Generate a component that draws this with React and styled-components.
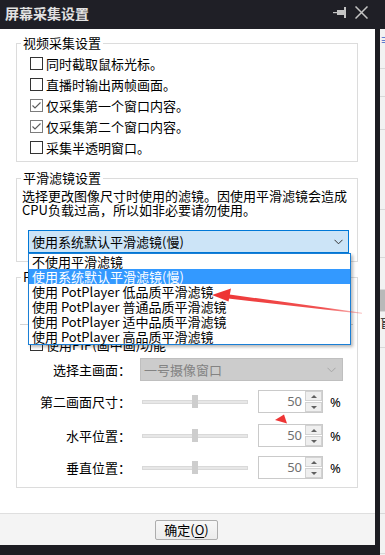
import React from 'react'
import styled, { createGlobalStyle } from 'styled-components'

const GlobalStyle = createGlobalStyle`
  * { box-sizing: border-box; }
  html, body { margin: 0; padding: 0; background: #fff; }
  body {
    font-family: "Noto Sans CJK SC", "Noto Sans", sans-serif;
    font-size: 13px;
    color: #000;
  }
`

const videoOptions = [
  { label: '同时截取鼠标光标。', checked: false },
  { label: '直播时输出两帧画面。', checked: false },
  { label: '仅采集第一个窗口内容。', checked: true },
  { label: '仅采集第二个窗口内容。', checked: true },
  { label: '采集半透明窗口。', checked: false },
]

const filterOptions = [
  '不使用平滑滤镜',
  '使用系统默认平滑滤镜(慢)',
  '使用 PotPlayer 低品质平滑滤镜',
  '使用 PotPlayer 普通品质平滑滤镜',
  '使用 PotPlayer 适中品质平滑滤镜',
  '使用 PotPlayer 高品质平滑滤镜',
]

const sliders = ['第二画面尺寸：', '水平位置：', '垂直位置：']

const Chevron = ({ color }) => (
  <svg width="9" height="6" viewBox="0 0 9 6">
    <polyline points="0.5,0.8 4.5,4.8 8.5,0.8" fill="none" stroke={color} strokeWidth="1" />
  </svg>
)

const Check = () => (
  <svg width="11" height="11" viewBox="0 0 11 11">
    <polyline points="1.5,5.5 4,8 9.5,2.5" fill="none" stroke="#5a5a5a" strokeWidth="1.1" />
  </svg>
)

const CheckOption = ({ label, checked }) => (
  <CheckRow>
    <Box checked={checked}>{checked && <Check />}</Box>
    <span>{label}</span>
  </CheckRow>
)

const SliderRow = ({ label }) => (
  <FormRow>
    <Label>{label}</Label>
    <Slider>
      <Track>
        <Thumb />
      </Track>
    </Slider>
    <Spin>
      <SpinValue>50</SpinValue>
      <SpinButtons>
        <SpinButton><Arrow up /></SpinButton>
        <SpinButton><Arrow /></SpinButton>
      </SpinButtons>
    </Spin>
    <Percent>%</Percent>
  </FormRow>
)

const App = () => (
  <>
    <GlobalStyle />
    <Screen>
      <TitleBar>
        <Title>屏幕采集设置</Title>
        <TitleIcons>
          <svg width="14" height="11" viewBox="0 0 14 11">
            <rect x="0" y="5" width="5" height="1.2" fill="#c4c4c4" />
            <rect x="4" y="3" width="7" height="5" fill="#c4c4c4" />
            <rect x="11" y="0" width="2" height="11" fill="#c4c4c4" />
          </svg>
          <svg width="13" height="13" viewBox="0 0 13 13">
            <path d="M0.5 0.5 L12.5 12.5 M12.5 0.5 L0.5 12.5" stroke="#c4c4c4" strokeWidth="1.5" />
          </svg>
        </TitleIcons>
      </TitleBar>

      <Body>
        <WindowColumn>
          <Content>
            <Main>
              <Group>
                <Legend>视频采集设置</Legend>
                <CheckList>
                  {videoOptions.map(o => (
                    <CheckOption key={o.label} {...o} />
                  ))}
                </CheckList>
              </Group>

              <Group gap={8}>
                <Legend>平滑滤镜设置</Legend>
                <FilterBody>
                  <Description>
                    选择更改图像尺寸时使用的滤镜。因使用平滑滤镜会造成
                    <br />
                    CPU负载过高，所以如非必要请勿使用。
                  </Description>
                  <SelectWrap>
                    <Select>
                      <span>使用系统默认平滑滤镜(慢)</span>
                      <Chevron color="#333" />
                    </Select>
                    <DropList>
                      {filterOptions.map((opt, i) => (
                        <DropItem key={opt} active={i === 1}>{opt}</DropItem>
                      ))}
                    </DropList>
                  </SelectWrap>
                </FilterBody>
              </Group>

              <Group gap={7}>
                <Legend>PIP(画中画)设置</Legend>
                <PipBody>
                  <Separator />
                  <CheckOption label="使用PIP(画中画)功能" checked={false} />
                  <FormRow first>
                    <Label>选择主画面：</Label>
                    <Combo>
                      <span>一号摄像窗口</span>
                      <Chevron color="#a6a6a6" />
                    </Combo>
                  </FormRow>
                  {sliders.map(s => (
                    <SliderRow key={s} label={s} />
                  ))}
                </PipBody>
              </Group>
            </Main>

            <Footer>
              <OkButton>
                确定(<u>O</u>)
              </OkButton>
            </Footer>
          </Content>
        </WindowColumn>

        <Strip>
          <StripCell h={40}><StripGlyph>≡</StripGlyph></StripCell>
          <StripCell h={28} />
          <StripCell h={33} />
          <StripCell h={80} />
          <StripCell h={48} />
          <StripCell h={32} />
          <StripCell h={22} dark />
          <StripCell h={36}><StripGlyph dark>盲</StripGlyph></StripCell>
          <StripCell h={166} />
          <StripCell h={40} />
        </Strip>
      </Body>

      <Marks viewBox="0 0 385 555">
        <defs>
          <linearGradient id="tail" x1="212" y1="0" x2="362" y2="0" gradientUnits="userSpaceOnUse">
            <stop offset="0" stopColor="#ee3535" stopOpacity="1" />
            <stop offset="0.75" stopColor="#ee3535" stopOpacity="0.85" />
            <stop offset="1" stopColor="#ee3535" stopOpacity="0.3" />
          </linearGradient>
        </defs>
        <polygon points="226,294 226,298.2 362,313.8 362,312.8" fill="url(#tail)" />
        <polygon points="212,295 231,288.5 228.5,301.5" fill="#ee3535" />
        <polygon points="275,420 284,414.5 287,423.5" fill="#ee3535" />
      </Marks>
    </Screen>
  </>
)

const Screen = styled.div`
  position: relative;
  width: 385px;
  height: 555px;
  display: flex;
  flex-direction: column;
  background: #1f1f25;
  overflow: hidden;
`

const TitleBar = styled.div`
  height: 29px;
  flex: none;
  display: flex;
  align-items: center;
  padding-left: 5px;
  background: #1f1f26;
`

const Title = styled.div`
  color: #e2e2e2;
  font-size: 14px;
  font-weight: bold;
  line-height: 16px;
  margin-top: -3px;
`

const TitleIcons = styled.div`
  margin-left: auto;
  margin-right: 17px;
  margin-top: -4px;
  display: flex;
  align-items: center;
  gap: 8px;
`

const Body = styled.div`
  flex: 1;
  display: flex;
`

const WindowColumn = styled.div`
  width: 380px;
  background: #1d1d22;
`

const Content = styled.div`
  width: 375px;
  height: 516px;
  background: #fff;
  display: flex;
  flex-direction: column;
`

const Main = styled.div`
  padding: 6px 17px 0 16px;
`

const Group = styled.fieldset`
  margin: ${p => p.gap || 0}px 0 0;
  padding: 0;
  min-width: 0;
  border: 1px solid #dcdcdc;
`

const Legend = styled.legend`
  margin-left: 4px;
  padding: 0 2px;
  font-size: 13px;
  line-height: 16px;
`

const CheckList = styled.div`
  padding: 2px 0 3px 13px;
`

const CheckRow = styled.div`
  height: 21px;
  display: flex;
  align-items: center;
  gap: 3px;
  line-height: 16px;
`

const Box = styled.span`
  width: 13px;
  height: 13px;
  flex: none;
  display: flex;
  align-items: center;
  justify-content: center;
  background: #fff;
  border: 1px solid ${p => (p.checked ? '#7c7c7c' : '#333')};
`

const FilterBody = styled.div`
  padding: 3px 0 8px 5px;
`

const Description = styled.div`
  line-height: 14px;
`

const SelectWrap = styled.div`
  position: relative;
  margin: 13px 0 0 6px;
  width: 321px;
`

const Select = styled.div`
  height: 23px;
  display: flex;
  align-items: center;
  justify-content: space-between;
  padding: 0 5px 0 3px;
  background: #cce4f7;
  border: 1px solid #0078d7;
`

const DropList = styled.div`
  position: absolute;
  top: 100%;
  left: 0;
  z-index: 5;
  width: 323px;
  padding: 0;
  background: #fff;
  border: 1px solid #1a7fd6;
  box-shadow: 2px 2px 3px rgba(0, 0, 0, 0.28);
`

const DropItem = styled.div`
  height: 15px;
  line-height: 15px;
  padding-left: 3px;
  white-space: nowrap;
  color: ${p => (p.active ? '#fff' : '#000')};
  background: ${p => (p.active ? '#3399ff' : 'transparent')};
`

const PipBody = styled.div`
  padding: 0 0 8px 13px;
`

const Separator = styled.div`
  height: 1px;
  margin: 39px 4px 9px -10px;
  background: #d4d4d4;
`

const FormRow = styled.div`
  display: flex;
  align-items: center;
  height: 23px;
  margin-top: ${p => (p.first ? 3 : 9)}px;
  margin-left: -13px;

  &:nth-child(5) {
    margin-top: 11px;
  }
`

const Label = styled.div`
  width: 114px;
  text-align: right;
  margin-right: 9px;
  white-space: nowrap;
`

const Combo = styled.div`
  width: 203px;
  height: 23px;
  display: flex;
  align-items: center;
  justify-content: space-between;
  padding: 0 6px 0 3px;
  color: #838383;
  background: #cccccc;
  border: 1px solid #bfbfbf;
`

const Slider = styled.div`
  width: 112px;
  padding: 0 4px 0 2px;
`

const Track = styled.div`
  height: 4px;
  display: flex;
  align-items: center;
  justify-content: center;
  background: #e7e7e7;
  border: 1px solid #d9d9d9;
`

const Thumb = styled.div`
  width: 6px;
  height: 13px;
  flex: none;
  background: #cdcdcd;
`

const Spin = styled.div`
  width: 65px;
  height: 23px;
  margin-left: 6px;
  display: flex;
  background: #fff;
  border: 1px solid #cacaca;
`

const SpinValue = styled.div`
  flex: 1;
  text-align: right;
  padding-right: 3px;
  font-family: "Noto Sans", "Liberation Sans", sans-serif;
  font-size: 13px;
  line-height: 21px;
  color: #6f6f6f;
`

const SpinButtons = styled.div`
  width: 17px;
  display: flex;
  flex-direction: column;
  gap: 1px;
  padding: 0 0 0 0;
`

const SpinButton = styled.div`
  flex: 1;
  display: flex;
  align-items: center;
  justify-content: center;
  background: #efefef;
  border: 1px solid #d2d2d2;
`

const Arrow = styled.span`
  width: 0;
  height: 0;
  border-left: 3px solid transparent;
  border-right: 3px solid transparent;
  ${p => (p.up ? 'border-bottom: 3px solid #606060;' : 'border-top: 3px solid #606060;')}
`

const Percent = styled.div`
  margin-left: 7px;
  font-family: "Noto Sans", "Liberation Sans", sans-serif;
  font-size: 13px;
`

const Footer = styled.div`
  margin-top: auto;
  height: 32px;
  display: flex;
  align-items: center;
  justify-content: center;
  background: #f4f4f4;
  border-top: 1px solid #dfdfdf;
`

const OkButton = styled.div`
  width: 63px;
  height: 20px;
  margin-left: -2px;
  display: flex;
  align-items: center;
  justify-content: center;
  line-height: 16px;
  background: linear-gradient(#f7f7f7, #ececec);
  border: 1px solid #adadad;
  border-radius: 2px;

  u {
    text-underline-offset: 2px;
  }
`

const Strip = styled.div`
  width: 5px;
  display: flex;
  flex-direction: column;
  background: #f2f2f2;
`

const StripCell = styled.div`
  height: ${p => p.h}px;
  flex: none;
  overflow: hidden;
  background: ${p => (p.dark ? '#b9b9b9' : 'transparent')};
  border-bottom: 1px solid #d8d8d8;
`

const StripGlyph = styled.div`
  margin-top: 4px;
  font-size: 12px;
  line-height: 14px;
  color: ${p => (p.dark ? '#222' : '#3a63c8')};
`

const Marks = styled.svg`
  position: absolute;
  left: 0;
  top: 0;
  width: 385px;
  height: 555px;
  z-index: 10;
  pointer-events: none;
`

export default App
